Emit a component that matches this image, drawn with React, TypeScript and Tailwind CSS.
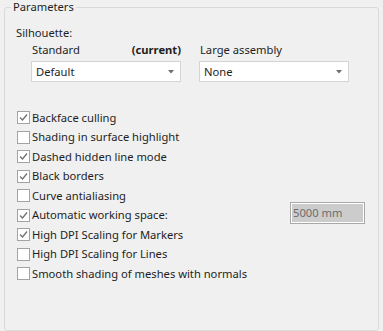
import React from "react";

const font = { fontFamily: '"Noto Sans", "Open Sans", sans-serif' };

function Check({ checked }: { checked: boolean }) {
  return (
    <div className="w-[13px] h-[13px] border border-[#a3a3a3] bg-white flex items-center justify-center shrink-0">
      {checked && (
        <svg width="9" height="9" viewBox="0 0 9 9">
          <path d="M1 4.5 L3.5 7 L8 1.5" fill="none" stroke="#707070" strokeWidth="1.3" />
        </svg>
      )}
    </div>
  );
}

function Row({ label, checked, children }: { label: string; checked: boolean; children?: React.ReactNode }) {
  return (
    <div className="h-[19.5px] flex items-center">
      <Check checked={checked} />
      <span className="ml-[2px] leading-[16px]">{label}</span>
      {children}
    </div>
  );
}

function Select({ value }: { value: string }) {
  return (
    <div className="w-[150px] h-[21px] bg-white border border-[#d4d4d4] flex items-center pl-[4px] pr-[6px]">
      <span className="flex-1 leading-[16px]">{value}</span>
      <svg width="6" height="4" viewBox="0 0 6 4">
        <path d="M0 0 H6 L3 3.5 Z" fill="#6e6e6e" />
      </svg>
    </div>
  );
}

export default function App() {
  return (
    <div className="w-[383px] h-[331px] overflow-hidden bg-[#f0f0f0] text-[11.2px] text-[#1e1e1e] pt-[1px] px-[4px]" style={font}>
      <fieldset className="h-[330px] border border-[#d9d9d9] rounded-[3px] pl-[11px] pr-[13px]">
        <legend className="ml-[-5px] px-[2px] leading-[12px] text-[#1e1e1e]">Parameters</legend>
        <div className="pt-[12px] leading-[16px]">Silhouette:</div>
        <div className="flex gap-[18px] pl-[15px]">
          <div className="flex flex-col">
            <div className="flex justify-between h-[17px] items-end pl-[1px]">
              <span className="leading-[16px]">Standard</span>
              <span className="font-bold leading-[16px]">(current)</span>
            </div>
            <div className="mt-[3px]">
              <Select value="Default" />
            </div>
          </div>
          <div className="flex flex-col">
            <div className="h-[17px] flex items-end pl-[1px]">
              <span className="leading-[16px]">Large assembly</span>
            </div>
            <div className="mt-[3px]">
              <Select value="None" />
            </div>
          </div>
        </div>
        <div className="mt-[26px] flex flex-col pl-[1px]">
          <Row label="Backface culling" checked />
          <Row label="Shading in surface highlight" checked={false} />
          <Row label="Dashed hidden line mode" checked />
          <Row label="Black borders" checked />
          <Row label="Curve antialiasing" checked={false} />
          <Row label="Automatic working space:" checked>
            <div className="ml-auto mb-[4px] w-[75px] h-[22px] border border-[#a8a8a8] bg-[#cccccc] shadow-[inset_0_0_0_1px_#ffffff] flex items-center pl-[2px] text-[#6d6d6d]">
              5000 mm
            </div>
          </Row>
          <Row label="High DPI Scaling for Markers" checked />
          <Row label="High DPI Scaling for Lines" checked={false} />
          <Row label="Smooth shading of meshes with normals" checked={false} />
        </div>
      </fieldset>
    </div>
  );
}
